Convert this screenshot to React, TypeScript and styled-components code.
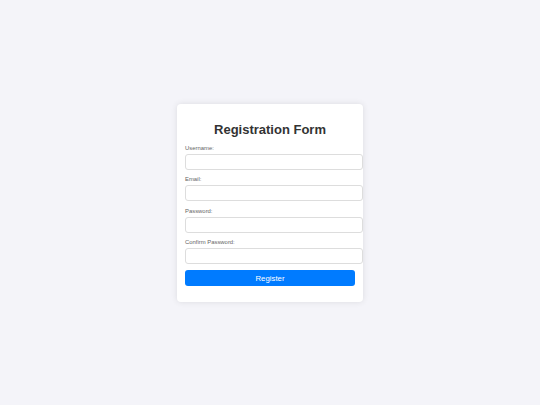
import React from 'react';
import styled, { createGlobalStyle } from 'styled-components';

const GlobalStyle = createGlobalStyle`
  html, body {
    margin: 0;
    padding: 0;
    background: #f4f4f9;
    font-family: "Liberation Sans", Arial, sans-serif;
  }
`;

const Page = styled.div`
  display: flex;
  justify-content: center;
  align-items: flex-start;
  width: 540px;
  height: 405px;
  padding-top: 104px;
  box-sizing: border-box;
`;

const Card = styled.form`
  width: 170px;
  padding: 8px 8px 16px;
  background: #fff;
  border-radius: 4px;
  box-shadow: 0 0 6px rgba(0, 0, 0, 0.1);
`;

const Title = styled.h2`
  margin: 10px 0 8px;
  font-size: 13px;
  line-height: 15px;
  font-weight: bold;
  color: #333;
  text-align: center;
`;

const Field = styled.div`
  margin-bottom: 6.3px;
`;

const Label = styled.label`
  display: block;
  margin-bottom: 2px;
  font-size: 5.9px;
  line-height: 7px;
  color: #666;
`;

const Input = styled.input`
  display: block;
  width: 100%;
  height: 8px;
  padding: 3px;
  margin: 0;
  border: 1px solid #ddd;
  border-radius: 3px;
  box-sizing: content-box;
  background: #fff;
  font-family: inherit;
  font-size: 6px;
  outline: none;
`;

const Button = styled.button`
  display: block;
  width: 100%;
  height: 16px;
  padding: 0;
  border: none;
  border-radius: 3px;
  background: #007bff;
  color: #fff;
  font-family: inherit;
  font-size: 7.8px;
  cursor: pointer;
`;

const fields = [
  { id: 'username', label: 'Username:', type: 'text' },
  { id: 'email', label: 'Email:', type: 'email' },
  { id: 'password', label: 'Password:', type: 'password' },
  { id: 'confirm', label: 'Confirm Password:', type: 'password' },
];

export default function App() {
  return (
    <>
      <GlobalStyle />
      <Page>
        <Card onSubmit={(e) => e.preventDefault()}>
          <Title>Registration Form</Title>
          {fields.map((f) => (
            <Field key={f.id}>
              <Label htmlFor={f.id}>{f.label}</Label>
              <Input id={f.id} type={f.type} />
            </Field>
          ))}
          <Button type="submit">Register</Button>
        </Card>
      </Page>
    </>
  );
}
